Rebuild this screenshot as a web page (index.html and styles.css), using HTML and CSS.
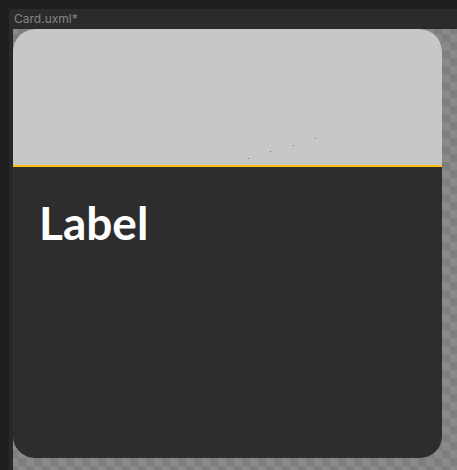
FILE: index.html
```html
<!DOCTYPE html>
<html lang="en">
<head>
    <meta charset="UTF-8">
    <title>Card.uxml</title>
    <link rel="stylesheet" href="styles.css">
</head>
<body>
    <div class="editor">
        <div class="tab-bar">Card.uxml*</div>
        <div class="panel">
            <div class="gutter"></div>
            <div class="canvas">
                <div class="card">
                    <div class="card-image">
                        <svg class="specks" width="100" height="30" viewBox="0 0 100 30">
                            <rect x="0" y="23" width="1" height="1" fill="#7a7a7a"/>
                            <rect x="22" y="16" width="1" height="1" fill="#6e6e6e"/>
                            <rect x="45" y="10" width="1" height="1" fill="#747474"/>
                            <rect x="67" y="3" width="1" height="1" fill="#6e6e6e"/>
                        </svg>
                    </div>
                    <div class="card-body">
                        <h1 class="card-label">Label</h1>
                    </div>
                </div>
            </div>
        </div>
    </div>
</body>
</html>
```

FILE: styles.css
```css
body {
    margin: 0;
    background-color: #1f1f1f;
    font-family: Lato, 'Noto Sans', sans-serif;
    overflow: hidden;
}
.editor {
    padding: 9px 0 0 9px;
    height: 461px;
    display: flex;
    flex-direction: column;
}
.tab-bar {
    height: 20px;
    line-height: 19px;
    background-color: #2b2b2b;
    color: #858585;
    font-family: Inter, 'Noto Sans', sans-serif;
    font-size: 12px;
    padding-left: 5px;
}
.panel {
    flex: 1;
    display: flex;
}
.gutter {
    width: 4px;
    background-color: #282828;
}
.canvas {
    flex: 1;
    background-color: #8a8a8a;
    background-image: conic-gradient(#7f7f7f 25%, #8a8a8a 0 50%, #7f7f7f 0 75%, #8a8a8a 0);
    background-size: 16px 16px;
    background-position: -3px -3px;
}
.card {
    width: 429px;
    height: 429px;
    border-radius: 22px;
    overflow: hidden;
    display: flex;
    flex-direction: column;
    background-color: #2d2d2d;
}
.card-image {
    position: relative;
    height: 136px;
    background-color: #c7c7c7;
    border-bottom: 2px solid #fbc10d;
}
.specks {
    position: absolute;
    left: 235px;
    top: 106px;
}
.card-body {
    flex: 1;
    padding: 0 26px;
}
.card-label {
    margin: 28px 0 0;
    font-size: 46px;
    font-weight: 700;
    color: #ffffff;
    line-height: 56px;
}
```
